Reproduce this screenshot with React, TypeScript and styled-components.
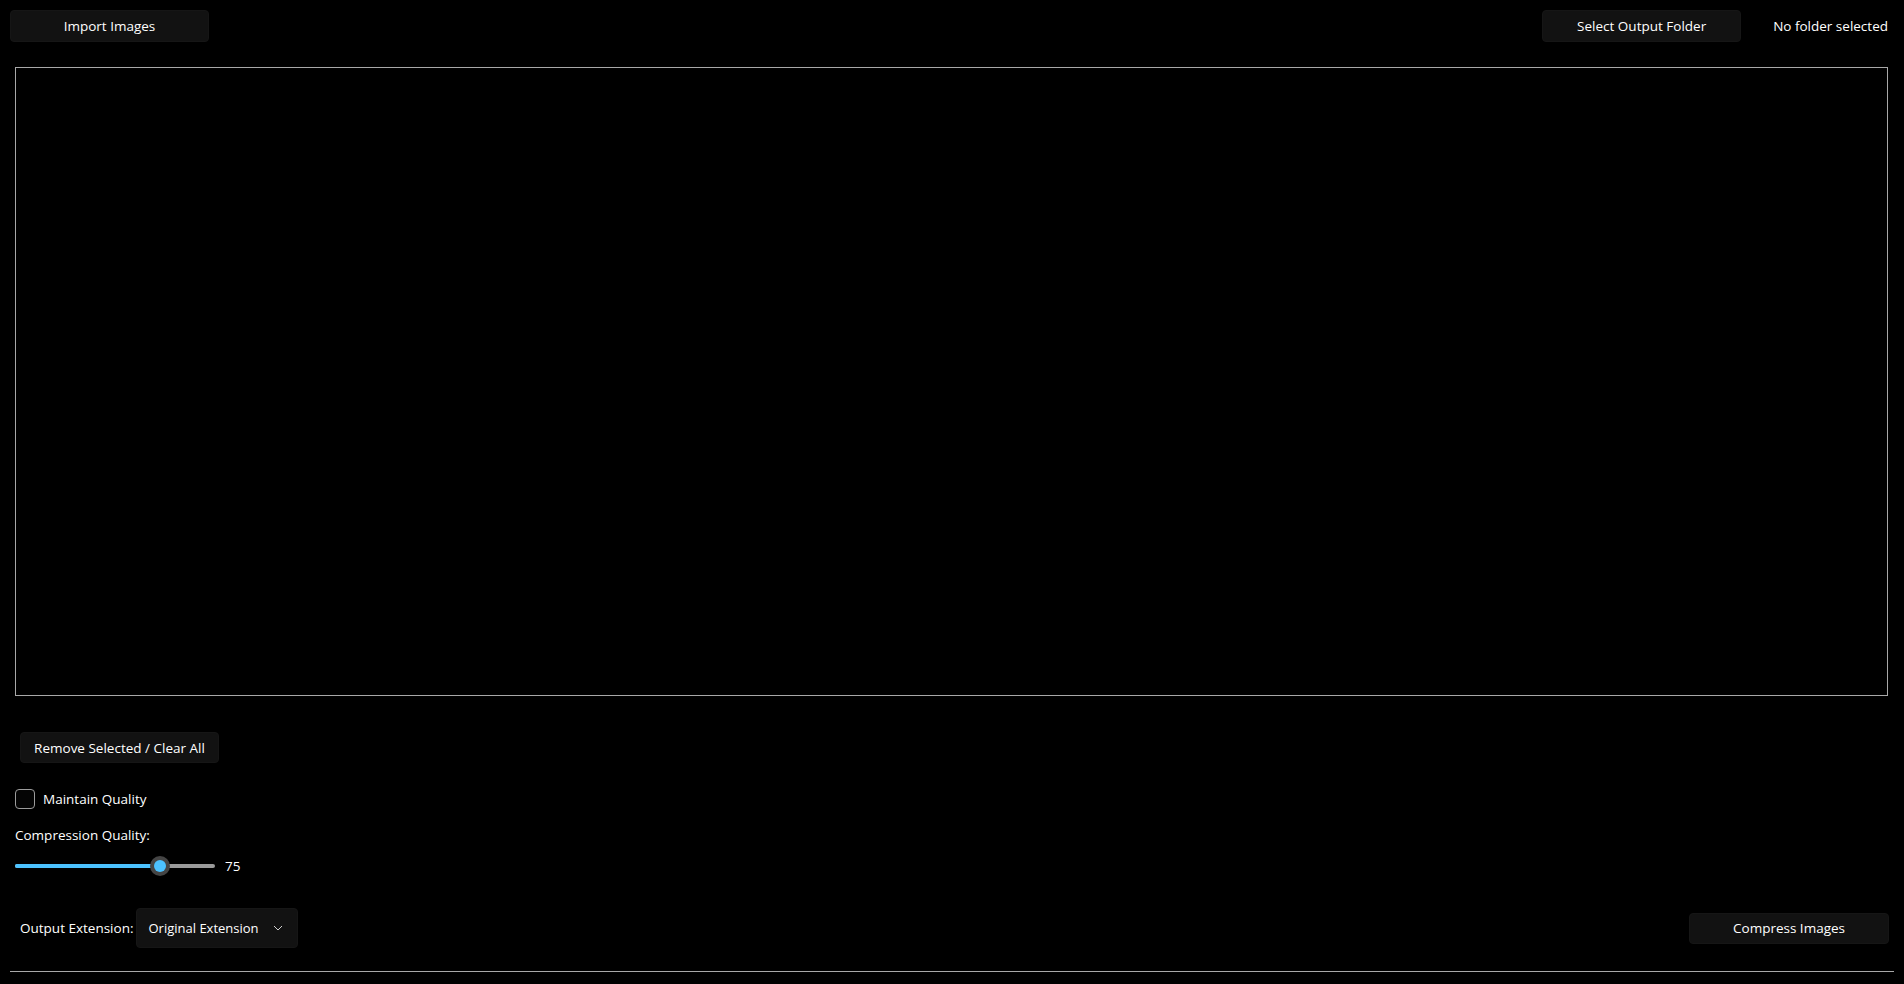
import React, { useState } from "react";
import styled, { createGlobalStyle } from "styled-components";

const GlobalStyle = createGlobalStyle`
  html, body {
    margin: 0;
    padding: 0;
    background: #000;
    height: 100%;
  }
  body {
    font-family: "Open Sans", "Noto Sans", sans-serif;
    color: #fff;
    font-size: 13.5px;
  }
  #root {
    height: 100%;
  }
`;

const Page = styled.div`
  width: 1904px;
  height: 984px;
  box-sizing: border-box;
  display: flex;
  flex-direction: column;
  overflow: hidden;
`;

const TopBar = styled.div`
  display: flex;
  align-items: center;
  padding: 10px 16px 0 10px;
  height: 32px;
`;

const Spacer = styled.div`
  flex: 1;
`;

const Button = styled.button<{ $width?: number; $height?: number }>`
  width: ${({ $width }) => $width ?? 199}px;
  height: ${({ $height }) => $height ?? 32}px;
  background: #121212;
  border: 1px solid #161616;
  border-radius: 4px;
  color: #fff;
  font-family: inherit;
  font-size: 13.5px;
  padding: 0;
  display: flex;
  align-items: center;
  justify-content: center;
  cursor: pointer;
`;

const FolderText = styled.span`
  margin-left: 32px;
  font-size: 13.5px;
`;

const ListBox = styled.div`
  margin: 25px 16px 0 15px;
  height: 627px;
  border: 1px solid #a8a8a8;
`;

const Controls = styled.div`
  display: flex;
  flex-direction: column;
  padding: 0 15px;
`;

const RemoveRow = styled.div`
  margin-top: 36px;
  padding-left: 5px;
`;

const CheckRow = styled.label`
  display: flex;
  align-items: center;
  gap: 8px;
  margin-top: 26px;
  height: 20px;
  cursor: pointer;
`;

const CheckBox = styled.span<{ $checked: boolean }>`
  width: 18px;
  height: 18px;
  border: 1px solid #9c9c9c;
  border-radius: 4px;
  background: ${({ $checked }) => ($checked ? "#4cc2ff" : "#050505")};
`;

const FieldLabel = styled.div`
  margin-top: 17px;
  line-height: 19px;
`;

const SliderRow = styled.div`
  display: flex;
  align-items: center;
  margin-top: 11px;
  height: 20px;
`;

const Track = styled.div`
  position: relative;
  width: 200px;
  height: 4px;
  border-radius: 2px;
  background: #9a9a9a;
`;

const Fill = styled.div`
  height: 100%;
  border-radius: 2px;
  background: #4cc2ff;
`;

const Thumb = styled.div`
  position: absolute;
  top: 50%;
  width: 20px;
  height: 20px;
  margin-left: -10px;
  margin-top: -10px;
  border-radius: 50%;
  background: #454545;
  display: flex;
  align-items: center;
  justify-content: center;
  &::after {
    content: "";
    width: 12px;
    height: 12px;
    border-radius: 50%;
    background: #4cc2ff;
  }
`;

const Value = styled.span`
  margin-left: 10px;
`;

const BottomRow = styled.div`
  display: flex;
  align-items: center;
  margin-top: 32px;
  padding: 0 0 0 5px;
  height: 40px;
`;

const BottomLabel = styled.span`
  margin-right: 3px;
`;

const Combo = styled.div`
  width: 162px;
  height: 40px;
  box-sizing: border-box;
  background: #121212;
  border: 1px solid #161616;
  border-radius: 4px;
  display: flex;
  align-items: center;
  padding: 0 14px 0 11px;
  font-size: 13px;
  justify-content: space-between;
`;

const Footer = styled.div`
  margin: 23px 10px 0 10px;
  border-top: 1px solid #a8a8a8;
`;

export default function App() {
  const [checked, setChecked] = useState(false);
  const quality = 75;
  return (
    <Page>
      <GlobalStyle />
      <TopBar>
        <Button>Import Images</Button>
        <Spacer />
        <Button>Select Output Folder</Button>
        <FolderText>No folder selected</FolderText>
      </TopBar>
      <ListBox />
      <Controls>
        <RemoveRow>
          <Button $height={31}>Remove Selected / Clear All</Button>
        </RemoveRow>
        <CheckRow onClick={() => setChecked(!checked)}>
          <CheckBox $checked={checked} />
          Maintain Quality
        </CheckRow>
        <FieldLabel>Compression Quality:</FieldLabel>
        <SliderRow>
          <Track>
            <Fill style={{ width: `${quality - 2}%` }} />
            <Thumb style={{ left: `${quality - 2.5}%` }} />
          </Track>
          <Value>{quality}</Value>
        </SliderRow>
        <BottomRow>
          <BottomLabel>Output Extension:</BottomLabel>
          <Combo>
            Original Extension
            <svg width="10" height="6" viewBox="0 0 10 6">
              <path d="M1 1 L5 5 L9 1" fill="none" stroke="#cfcfcf" strokeWidth="1" />
            </svg>
          </Combo>
          <Spacer />
          <Button $width={200} $height={31}>
            Compress Images
          </Button>
        </BottomRow>
      </Controls>
      <Footer />
    </Page>
  );
}
